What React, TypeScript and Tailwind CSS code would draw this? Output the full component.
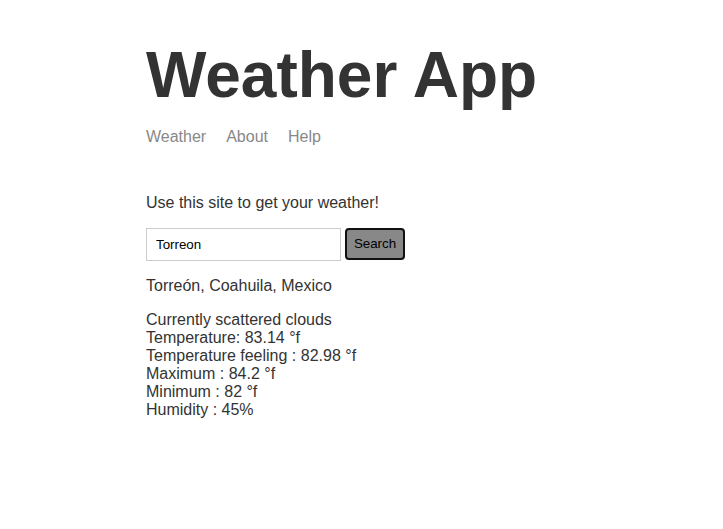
import { useState } from "react";

const forecastLines = [
  "Currently scattered clouds",
  "Temperature: 83.14 °f",
  "Temperature feeling : 82.98 °f",
  "Maximum : 84.2 °f",
  "Minimum : 82 °f",
  "Humidity : 45%",
];

const App = () => {
  const [address, setAddress] = useState("Torreon");

  return (
    <div className="min-h-[529px] bg-white text-[#333333] font-['Liberation_Sans',Arial,sans-serif]">
      <div className="mx-auto w-[431px] pt-[38px]">
        <h1 className="text-[64px] leading-[74px] font-bold">Weather App</h1>
        <nav className="mt-[16px] flex gap-5 text-[16px] leading-[18px] text-[#888888]">
          <a href="#">Weather</a>
          <a href="#">About</a>
          <a href="#">Help</a>
        </nav>

        <p className="mt-[48px] text-[16px] leading-[18px]">Use this site to get your weather!</p>

        <form className="mt-[16px] flex gap-1" onSubmit={(e) => e.preventDefault()}>
          <input
            value={address}
            onChange={(e) => setAddress(e.target.value)}
            className="h-[33px] w-[195px] border border-[#cccccc] px-[9px] text-[13.33px] text-black outline-none"
          />
          <button className="h-[32px] w-[60px] rounded-[4px] border-2 border-[#111111] bg-[#888888] text-[13.33px] text-black">
            Search
          </button>
        </form>

        <p className="mt-[16px] text-[16px] leading-[18px]">Torreón, Coahuila, Mexico</p>
        <div className="mt-[16px] text-[16px] leading-[18px]">
          {forecastLines.map((line) => (
            <p key={line}>{line}</p>
          ))}
        </div>
      </div>
    </div>
  );
};

export default App;
